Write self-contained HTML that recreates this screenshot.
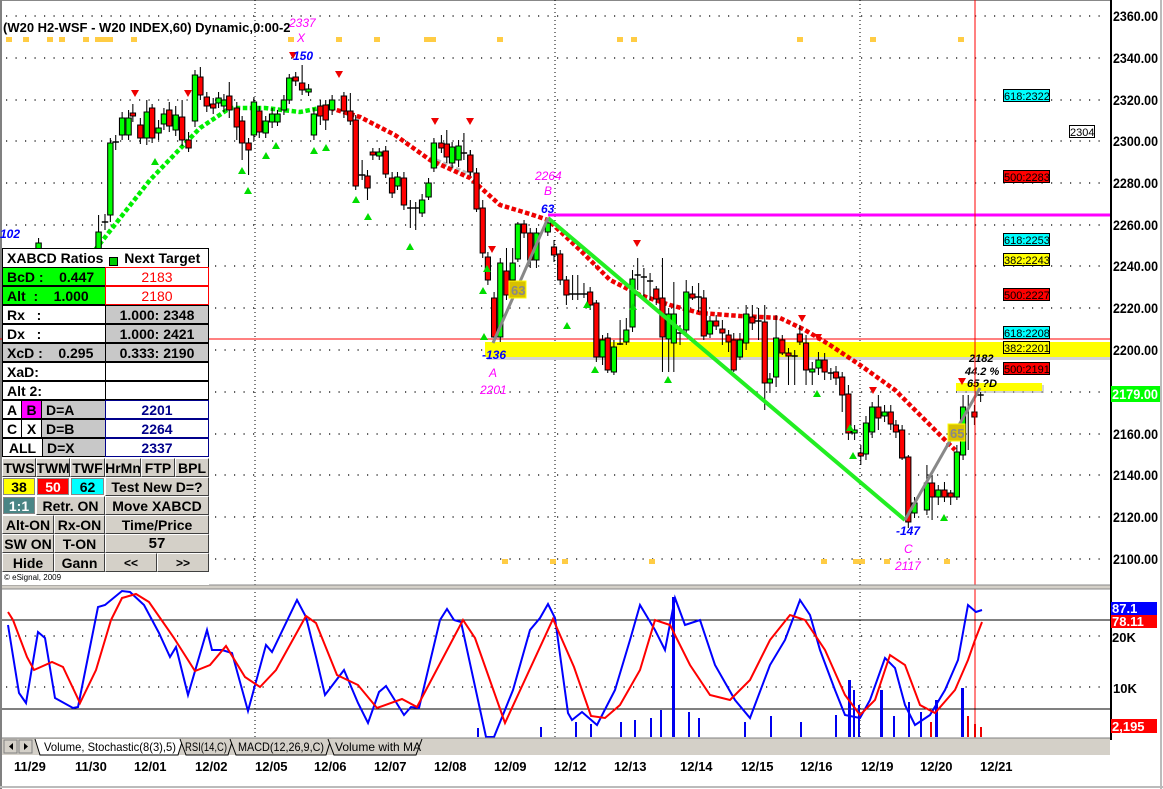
<!DOCTYPE html>
<html><head><meta charset="utf-8"><style>
*{margin:0;padding:0}
body{width:1163px;height:789px;overflow:hidden;background:#fff;position:relative;font-family:"Liberation Sans",Arial,sans-serif}
svg{position:absolute;left:0;top:0}
.c{position:absolute;box-sizing:border-box;border:1px solid #000;font:bold 14px "Liberation Sans",sans-serif;display:flex;align-items:center;height:19px;white-space:pre;overflow:hidden}
.ctr{justify-content:center}
.b{background:#d4d0c8;border:1px solid;border-color:#fff #404040 #404040 #fff;justify-content:center}
</style></head><body>
<svg width="1163" height="789" viewBox="0 0 1163 789">
<rect x="0" y="0" width="1163" height="789" fill="#fff"/>
<rect x="0" y="0" width="1163" height="1" fill="#888"/>
<rect x="0" y="0" width="2" height="789" fill="#808080"/>
<g stroke="#000" stroke-width="1.2" stroke-dasharray="1.2 8.3">
<line x1="6" y1="16" x2="1105" y2="16"/><line x1="6" y1="58" x2="1105" y2="58"/><line x1="6" y1="100" x2="1105" y2="100"/><line x1="6" y1="141" x2="1105" y2="141"/><line x1="6" y1="183" x2="1105" y2="183"/><line x1="6" y1="225" x2="1105" y2="225"/><line x1="6" y1="266" x2="1105" y2="266"/><line x1="6" y1="308" x2="1105" y2="308"/><line x1="6" y1="350" x2="1105" y2="350"/><line x1="6" y1="392" x2="1105" y2="392"/><line x1="6" y1="434" x2="1105" y2="434"/><line x1="6" y1="475" x2="1105" y2="475"/><line x1="6" y1="517" x2="1105" y2="517"/><line x1="6" y1="559" x2="1105" y2="559"/>
<line x1="6" y1="636" x2="1105" y2="636"/><line x1="6" y1="687" x2="1105" y2="687"/>
</g>
<g stroke="#000" stroke-width="1" stroke-dasharray="1 3">
<line x1="255" y1="0" x2="255" y2="738"/><line x1="555" y1="0" x2="555" y2="738"/><line x1="860" y1="0" x2="860" y2="738"/>
</g>
<g fill="#ffcc44">
<rect x="6" y="37" width="6" height="5"/><rect x="23" y="37" width="6" height="5"/><rect x="47" y="37" width="6" height="5"/><rect x="59" y="37" width="6" height="5"/><rect x="83" y="37" width="6" height="5"/><rect x="95" y="37" width="18" height="5"/><rect x="131" y="37" width="6" height="5"/><rect x="288" y="37" width="6" height="5"/><rect x="336" y="37" width="6" height="5"/><rect x="374" y="37" width="6" height="5"/><rect x="424" y="37" width="12" height="5"/><rect x="497" y="37" width="6" height="5"/><rect x="617" y="37" width="6" height="5"/><rect x="631" y="37" width="6" height="5"/><rect x="797" y="37" width="6" height="5"/><rect x="870" y="37" width="6" height="5"/><rect x="958" y="37" width="6" height="5"/>
<rect x="502" y="559" width="6" height="5"/><rect x="550" y="559" width="6" height="5"/><rect x="562" y="559" width="6" height="5"/><rect x="649" y="559" width="6" height="5"/><rect x="821" y="559" width="6" height="5"/><rect x="853" y="559" width="12" height="5"/><rect x="884" y="559" width="6" height="5"/><rect x="944" y="559" width="6" height="5"/>
</g>
<rect x="487" y="345" width="623" height="15" fill="#aaa" opacity=".5"/>
<rect x="485" y="342" width="625" height="15" fill="#ffff00"/>
<rect x="958" y="385" width="86" height="8" fill="#aaa" opacity=".5"/>
<rect x="956" y="383" width="86" height="8" fill="#ffff00"/>
<line x1="0" y1="339" x2="1110" y2="339" stroke="#f00" stroke-width="1"/>
<line x1="548" y1="215" x2="1110" y2="215" stroke="#f0f" stroke-width="3"/>
<path d="M95 250 L150 180 L200 128 L230 108 L265 108 L300 112 L330 106" fill="none" stroke="#00ee00" stroke-width="4.5" stroke-dasharray="4.5 2.5"/>
<path d="M430 158 L470 175" fill="none" stroke="#bbb" stroke-width="4.5" stroke-dasharray="4.5 2.5"/>
<path d="M330 108 L360 117 L395 135 L430 160 L470 178 L500 205 L530 214 L548 220 L580 250 L610 280 L640 295 L670 305 L700 313 L740 316 L780 318 L805 330 L830 345 L860 365 L895 390 L925 420 L955 450" fill="none" stroke="#ee0000" stroke-width="4.5" stroke-dasharray="4.5 2.5"/>
<g transform="scale(1.0714 1)" stroke="#000" stroke-width="1">
<path d="M36 238V254M92 215V255M98 214V230M103 138V222M108 135V150M114 112V140M120 110V140M124 104V122M131 118V144M137 100V145M142 104V143M148 120V140M153 108V130M158 102V132M164 106V136M170 100V146M176 132V152M182 70V127M187 67V100M193 92V112M199 98V114M204 92V108M209 94V112M214 82V118M221 102V140M226 116V160M232 138V175M237 97V140M242 106V138M248 116V138M254 108V128M259 110V126M265 95V115M270 74V104M276 72V86M282 65V95M288 84V96M293 108V140M299 100V125M304 100V130M310 95V115M321 92V118M327 93V125M332 115V190M338 160V180M343 170V200M348 148V160M354 148V160M360 146V178M366 172V198M371 172V190M377 172V210M383 200V228M388 202V230M394 194V217M400 178V200M405 138V172M412 135V153M417 130V163M422 142V168M428 140V167M433 133V160M439 150V175"/>
<g fill="#00ff00">
<rect x="33.5" y="243" width="5" height="6"/><rect x="89.5" y="232" width="5" height="18"/><rect x="100.5" y="143" width="5" height="72"/><rect x="111.5" y="118" width="5" height="17"/><rect x="117.5" y="118" width="5" height="17"/><rect x="134.5" y="112" width="5" height="26"/><rect x="145.5" y="128" width="5" height="5"/><rect x="150.5" y="114" width="5" height="10"/><rect x="161.5" y="115" width="5" height="15"/><rect x="179.5" y="75" width="5" height="46"/><rect x="201.5" y="98" width="5" height="5"/><rect x="206.5" y="100" width="5" height="6"/><rect x="234.5" y="102" width="5" height="33"/><rect x="245.5" y="121" width="5" height="12"/><rect x="251.5" y="114" width="5" height="8"/><rect x="256.5" y="114" width="5" height="8"/><rect x="262.5" y="100" width="5" height="10"/><rect x="267.5" y="78" width="5" height="22"/><rect x="285.5" y="89" width="5" height="3"/><rect x="290.5" y="114" width="5" height="21"/><rect x="307.5" y="100" width="5" height="10"/><rect x="351.5" y="152" width="5" height="4"/><rect x="368.5" y="177" width="5" height="9"/><rect x="391.5" y="200" width="5" height="13"/><rect x="397.5" y="183" width="5" height="14"/><rect x="402.5" y="143" width="5" height="25"/><rect x="419.5" y="147" width="5" height="16"/><rect x="425.5" y="146" width="5" height="14"/>
</g>
<g fill="#ff0000">
<rect x="121.5" y="113" width="5" height="3"/><rect x="128.5" y="125" width="5" height="13"/><rect x="139.5" y="108" width="5" height="30"/><rect x="155.5" y="110" width="5" height="16"/><rect x="167.5" y="117" width="5" height="23"/><rect x="173.5" y="140" width="5" height="8"/><rect x="184.5" y="77" width="5" height="18"/><rect x="190.5" y="97" width="5" height="9"/><rect x="196.5" y="104" width="5" height="4"/><rect x="211.5" y="96" width="5" height="14"/><rect x="218.5" y="108" width="5" height="19"/><rect x="223.5" y="121" width="5" height="22"/><rect x="229.5" y="143" width="5" height="7"/><rect x="239.5" y="111" width="5" height="21"/><rect x="273.5" y="77" width="5" height="4"/><rect x="279.5" y="83" width="5" height="7"/><rect x="296.5" y="106" width="5" height="10"/><rect x="301.5" y="105" width="5" height="15"/><rect x="318.5" y="96" width="5" height="15"/><rect x="324.5" y="111" width="5" height="10"/><rect x="329.5" y="120" width="5" height="66"/><rect x="340.5" y="176" width="5" height="12"/><rect x="345.5" y="152" width="5" height="3"/><rect x="357.5" y="151" width="5" height="23"/><rect x="363.5" y="178" width="5" height="15"/><rect x="374.5" y="178" width="5" height="27"/><rect x="409.5" y="143" width="5" height="5"/><rect x="414.5" y="144" width="5" height="13"/><rect x="436.5" y="155" width="5" height="16"/>
</g>
<path d="M95 222H101M105 142H111M335 175H341M380 208H386M385 208H391M430 153H436" stroke-width="1.5"/>
</g>
<g transform="translate(460 0) scale(1.033 1) translate(-460 0)" stroke="#000" stroke-width="1">
<path d="M470 150V176M476 168V212M482 200V258M487 252V285M493 292V342M499 258V342M505 248V300M511 248V285M516 222V262M522 220V238M528 228V268M534 228V268M545 218V236M551 240V262M557 250V285M563 276V305M569 275V300M574 275V300M580 283V298M586 287V310M592 300V362M598 335V365M603 333V373M609 340V375M615 320V345M621 318V345M627 270V332M632 258V290M638 268V300M644 273V300M650 286V305M656 258V372M662 308V372M667 282V372M673 325V345M679 280V335M685 286V300M691 283V312M696 290V340M702 316V338M708 315V330M714 320V345M720 330V352M725 333V372M731 333V360M737 305V350M743 305V330M749 308V340M755 305V410M760 373V393M766 315V387M772 335V355M778 348V385M784 350V385M789 325V345M795 335V385M801 362V385M807 352V375M813 353V380M819 368V380M824 366V385M830 372V412M836 385V440M842 425V440M848 445V465M853 416V460M859 402V438M865 395V430M871 405V422M877 405V430M882 420V438M888 425V460M894 455V528M900 497V518M912 465V515M917 475V520M923 485V505M929 482V502M935 490V505M941 445V500M947 395V460M952 395V450M958 405V425M964 392V402"/>
<g fill="#ff0000">
<rect x="467.5" y="155" width="5" height="17"/><rect x="473.5" y="173" width="5" height="36"/><rect x="479.5" y="208" width="5" height="45"/><rect x="484.5" y="257" width="5" height="23"/><rect x="490.5" y="298" width="5" height="39"/><rect x="502.5" y="271" width="5" height="24"/><rect x="519.5" y="224" width="5" height="9"/><rect x="525.5" y="233" width="5" height="27"/><rect x="548.5" y="247" width="5" height="8"/><rect x="554.5" y="254" width="5" height="26"/><rect x="560.5" y="280" width="5" height="15"/><rect x="583.5" y="292" width="5" height="13"/><rect x="589.5" y="303" width="5" height="54"/><rect x="600.5" y="338" width="5" height="32"/><rect x="647.5" y="289" width="5" height="10"/><rect x="653.5" y="298" width="5" height="39"/><rect x="682.5" y="294" width="5" height="4"/><rect x="693.5" y="298" width="5" height="38"/><rect x="705.5" y="321" width="5" height="5"/><rect x="711.5" y="329" width="5" height="4"/><rect x="717.5" y="335" width="5" height="7"/><rect x="722.5" y="340" width="5" height="30"/><rect x="740.5" y="317" width="5" height="6"/><rect x="752.5" y="322" width="5" height="61"/><rect x="769.5" y="340" width="5" height="13"/><rect x="775.5" y="353" width="5" height="3"/><rect x="786.5" y="334" width="5" height="8"/><rect x="792.5" y="343" width="5" height="27"/><rect x="810.5" y="360" width="5" height="12"/><rect x="821.5" y="372" width="5" height="6"/><rect x="827.5" y="377" width="5" height="18"/><rect x="833.5" y="394" width="5" height="39"/><rect x="845.5" y="453" width="5" height="3"/><rect x="862.5" y="407" width="5" height="11"/><rect x="874.5" y="412" width="5" height="12"/><rect x="879.5" y="425" width="5" height="7"/><rect x="885.5" y="430" width="5" height="28"/><rect x="891.5" y="457" width="5" height="65"/><rect x="914.5" y="483" width="5" height="14"/><rect x="926.5" y="490" width="5" height="7"/><rect x="932.5" y="493" width="5" height="4"/><rect x="955.5" y="412" width="5" height="5"/>
</g>
<g fill="#00ff00">
<rect x="496.5" y="263" width="5" height="74"/><rect x="508.5" y="263" width="5" height="17"/><rect x="513.5" y="224" width="5" height="35"/><rect x="531.5" y="233" width="5" height="27"/><rect x="542.5" y="223" width="5" height="9"/><rect x="595.5" y="340" width="5" height="17"/><rect x="606.5" y="347" width="5" height="25"/><rect x="618.5" y="330" width="5" height="12"/><rect x="624.5" y="279" width="5" height="48"/><rect x="659.5" y="314" width="5" height="25"/><rect x="664.5" y="314" width="5" height="29"/><rect x="676.5" y="292" width="5" height="38"/><rect x="699.5" y="321" width="5" height="13"/><rect x="728.5" y="340" width="5" height="17"/><rect x="734.5" y="314" width="5" height="29"/><rect x="757.5" y="379" width="5" height="4"/><rect x="763.5" y="338" width="5" height="39"/><rect x="798.5" y="369" width="5" height="3"/><rect x="804.5" y="360" width="5" height="8"/><rect x="839.5" y="430" width="5" height="3"/><rect x="850.5" y="423" width="5" height="31"/><rect x="856.5" y="407" width="5" height="25"/><rect x="868.5" y="412" width="5" height="4"/><rect x="897.5" y="503" width="5" height="10"/><rect x="909.5" y="483" width="5" height="27"/><rect x="920.5" y="490" width="5" height="7"/><rect x="938.5" y="452" width="5" height="45"/><rect x="944.5" y="407" width="5" height="48"/>
</g>
<path d="M566 294H572M571 294H577M577 294H583M612 344H618M629 275H635M635 277H641M641 281H647M670 333H676M688 297H694M746 321H752M781 356H787M816 373H822M961 395H967" stroke-width="1.5"/>
</g>
<line x1="548" y1="218" x2="905" y2="520" stroke="#22ee22" stroke-width="4"/>
<line x1="493" y1="343" x2="548" y2="218" stroke="#888" stroke-width="3"/>
<line x1="905" y1="520" x2="980" y2="388" stroke="#888" stroke-width="3"/>
<rect x="509" y="281" width="17" height="17" fill="#d8c000" stroke="#ff0"/>
<text x="511" y="295" font-size="13" font-weight="bold" fill="#888">63</text>
<rect x="948" y="424" width="17" height="17" fill="#d8c000" stroke="#ff0"/>
<text x="950" y="438" font-size="13" font-weight="bold" fill="#888">65</text>
<g fill="#00dd00">
<path d="M155 158l4 7h-8z M242 167l4 7h-8z M248 187l4 7h-8z M266 152l4 7h-8z M276 142l4 7h-8z M314 147l4 7h-8z M326 144l4 7h-8z M356 196l4 7h-8z M368 213l4 7h-8z M410 243l4 7h-8z M487 265l4 7h-8z M483 287l4 7h-8z M484 333l4 7h-8z M567 322l4 7h-8z M595 366l4 7h-8z M633 303l4 7h-8z M668 376l4 7h-8z M817 390l4 7h-8z M850 424l4 7h-8z M853 452l4 7h-8z M944 514l4 7h-8z M587 301l4 7h-8z"/>
</g>
<g fill="#ee0000">
<path d="M131 90h8l-4 7z M184 90h8l-4 7z M289 52h8l-4 7z M335 71h8l-4 7z M431 118h8l-4 7z M466 118h8l-4 7z M488 246h8l-4 7z M633 240h8l-4 7z M798 315h8l-4 7z M814 334h8l-4 7z M869 387h8l-4 7z M958 378h8l-4 7z"/>
</g>
<text x="3" y="32" font-size="13" font-weight="bold" fill="#000">(W20 H2-WSF - W20 INDEX,60) Dynamic,0:00-2</text>
<g font-style="italic" font-weight="bold" font-size="12">
<text x="289" y="27" fill="#ff00ff" font-weight="normal">2337</text>
<text x="297" y="42" fill="#ff00ff" font-weight="normal">X</text>
<text x="293" y="60" fill="#0000ff">150</text>
<text x="0" y="238" fill="#0000ff">102</text>
<text x="535" y="180" fill="#ff00ff" font-weight="normal">2264</text>
<text x="544" y="195" fill="#ff00ff" font-weight="normal">B</text>
<text x="541" y="213" fill="#0000ff">63</text>
<text x="482" y="359" fill="#0000ff">-136</text>
<text x="489" y="377" fill="#ff00ff" font-weight="normal">A</text>
<text x="480" y="394" fill="#ff00ff" font-weight="normal">2201</text>
<text x="896" y="535" fill="#0000ff">-147</text>
<text x="904" y="553" fill="#ff00ff" font-weight="normal">C</text>
<text x="895" y="570" fill="#ff00ff" font-weight="normal">2117</text>
<text x="969" y="362" fill="#000" font-size="11">2182</text>
<text x="965" y="375" fill="#000" font-size="11">44.2 %</text>
<text x="967" y="387" fill="#000" font-size="11">65 ?D</text>
</g>
<line x1="975" y1="0" x2="975" y2="755" stroke="#f00" stroke-width="1"/>
<rect x="1110" y="0" width="53" height="789" fill="#fff"/>
<rect x="1110" y="0" width="2" height="740" fill="#000"/>
<g font-size="14" font-weight="bold" fill="#000">
<text x="1113" y="21" textLength="45" lengthAdjust="spacingAndGlyphs">2360.00</text><text x="1113" y="63" textLength="45" lengthAdjust="spacingAndGlyphs">2340.00</text><text x="1113" y="105" textLength="45" lengthAdjust="spacingAndGlyphs">2320.00</text><text x="1113" y="146" textLength="45" lengthAdjust="spacingAndGlyphs">2300.00</text><text x="1113" y="188" textLength="45" lengthAdjust="spacingAndGlyphs">2280.00</text><text x="1113" y="230" textLength="45" lengthAdjust="spacingAndGlyphs">2260.00</text><text x="1113" y="271" textLength="45" lengthAdjust="spacingAndGlyphs">2240.00</text><text x="1113" y="313" textLength="45" lengthAdjust="spacingAndGlyphs">2220.00</text><text x="1113" y="355" textLength="45" lengthAdjust="spacingAndGlyphs">2200.00</text><text x="1113" y="439" textLength="45" lengthAdjust="spacingAndGlyphs">2160.00</text><text x="1113" y="480" textLength="45" lengthAdjust="spacingAndGlyphs">2140.00</text><text x="1113" y="522" textLength="45" lengthAdjust="spacingAndGlyphs">2120.00</text><text x="1113" y="564" textLength="45" lengthAdjust="spacingAndGlyphs">2100.00</text>
</g>
<rect x="1111" y="386" width="49" height="16" fill="#00ff00"/>
<text x="1112" y="399" font-size="14" font-weight="bold" fill="#fff" textLength="46" lengthAdjust="spacingAndGlyphs">2179.00</text>
<g stroke="#000" stroke-width="1">
<rect x="1003.5" y="89.5" width="46" height="12" fill="#00ffff"/><rect x="1003.5" y="170.5" width="46" height="12" fill="#ff0000"/><rect x="1003.5" y="233.5" width="46" height="12" fill="#00ffff"/><rect x="1003.5" y="253.5" width="46" height="12" fill="#ffff00"/><rect x="1003.5" y="288.5" width="46" height="12" fill="#ff0000"/><rect x="1003.5" y="326.5" width="46" height="12" fill="#00ffff"/><rect x="1003.5" y="341.5" width="46" height="12" fill="#ffff00"/><rect x="1003.5" y="362.5" width="46" height="12" fill="#ff0000"/><rect x="1069.5" y="125.5" width="25" height="12" fill="#fff"/>
</g>
<g font-size="11" fill="#000">
<text x="1004" y="100">618:2322</text><text x="1004" y="181">500:2283</text><text x="1004" y="244">618:2253</text><text x="1004" y="264">382:2243</text><text x="1004" y="299">500:2227</text><text x="1004" y="337">618:2208</text><text x="1004" y="352">382:2201</text><text x="1004" y="373">500:2191</text><text x="1070" y="136">2304</text>
</g>
<rect x="2" y="585" width="1108" height="4" fill="#d4d0c8"/>
<line x1="2" y1="585" x2="1110" y2="585" stroke="#888"/>
<line x1="2" y1="589" x2="1110" y2="589" stroke="#888"/>
<line x1="2" y1="620" x2="1110" y2="620" stroke="#000"/>
<line x1="2" y1="709" x2="1110" y2="709" stroke="#000"/>
<g fill="#0000ee">
<rect x="672" y="597" width="3" height="140"/><rect x="848" y="680" width="3" height="57"/><rect x="853" y="690" width="2" height="47"/><rect x="858" y="705" width="2" height="32"/><rect x="880" y="690" width="3" height="47"/><rect x="688" y="712" width="2" height="25"/><rect x="698" y="718" width="2" height="19"/><rect x="634" y="720" width="2" height="17"/><rect x="650" y="718" width="2" height="19"/><rect x="660" y="710" width="2" height="27"/><rect x="744" y="722" width="2" height="15"/><rect x="770" y="716" width="2" height="21"/><rect x="800" y="722" width="2" height="15"/><rect x="835" y="715" width="2" height="22"/><rect x="893" y="716" width="2" height="21"/><rect x="908" y="702" width="2" height="35"/><rect x="920" y="712" width="2" height="25"/><rect x="935" y="700" width="3" height="37"/><rect x="961" y="688" width="3" height="49"/><rect x="575" y="722" width="2" height="15"/><rect x="590" y="724" width="2" height="13"/><rect x="620" y="722" width="2" height="15"/><rect x="477" y="728" width="2" height="9"/><rect x="540" y="727" width="2" height="10"/>
</g>
<g fill="#ee0000"><rect x="967" y="716" width="2" height="21"/><rect x="974" y="724" width="2" height="13"/><rect x="980" y="727" width="2" height="10"/><rect x="930" y="722" width="2" height="15"/></g>
<polyline fill="none" stroke="#0000ff" stroke-width="2" points="8,625 19,693 26,703 38,632 45,638 55,698 73,708 78,707 98,607 105,605 122,591 130,592 144,605 159,633 170,657 176,647 188,695 207,630 212,650 222,650 232,653 248,711 266,645 272,652 297,600 306,617 316,657 325,695 344,670 358,703 368,723 379,692 386,686 404,715 411,707 419,708 440,620 447,609 454,620 461,622 486,737 494,737 513,690 530,630 540,618 548,604 555,618 568,713 572,720 582,712 597,725 615,690 630,640 640,605 655,630 665,650 675,598 685,625 700,620 715,665 735,700 750,718 770,665 785,640 800,600 810,615 820,650 835,690 845,715 860,718 870,700 885,658 895,668 905,705 915,725 930,715 945,690 958,660 968,605 976,612 982,610"/>
<polyline fill="none" stroke="#ff0000" stroke-width="2" points="8,612 13,620 27,657 34,670 52,662 63,667 80,703 96,670 111,620 122,598 136,594 149,602 174,638 195,671 210,665 226,646 245,677 260,687 276,670 306,616 316,623 337,675 358,685 377,708 402,699 417,707 463,620 475,638 505,723 553,619 574,667 591,716 605,718 620,705 640,670 655,620 670,625 690,665 710,695 730,700 750,680 770,640 790,615 805,620 825,650 845,695 860,715 875,700 890,655 905,665 920,705 935,713 955,690 968,660 975,640 982,622"/>
<rect x="1111" y="602" width="46" height="13" fill="#0000ff"/><text x="1112" y="613" font-size="13" font-weight="bold" fill="#fff">87.1</text>
<rect x="1111" y="615" width="46" height="13" fill="#ff0000"/><text x="1112" y="626" font-size="13" font-weight="bold" fill="#fff">78.11</text>
<text x="1112" y="642" font-size="13" font-weight="bold" fill="#000">20K</text>
<text x="1113" y="693" font-size="13" font-weight="bold" fill="#000">10K</text>
<rect x="1111" y="719" width="46" height="14" fill="#ff0000"/><text x="1112" y="731" font-size="13" font-weight="bold" fill="#fff">2,195</text>
<rect x="2" y="738" width="1108" height="17" fill="#d4d0c8"/>
<line x1="2" y1="738" x2="1110" y2="738" stroke="#808080"/>
<rect x="4" y="740" width="13" height="13" fill="#d4d0c8" stroke="#808080"/><path d="M13 743v7l-4-3.5z" fill="#000"/>
<rect x="19" y="740" width="13" height="13" fill="#d4d0c8" stroke="#808080"/><path d="M24 743v7l4-3.5z" fill="#000"/>
<path d="M35 739 L40 755 H178 L183 739" fill="#fff" stroke="#000"/>
<path d="M180 739 L186 755 H228 L233 739" fill="#d4d0c8" stroke="#000"/>
<path d="M230 739 L236 755 H326 L331 739" fill="#d4d0c8" stroke="#000"/>
<path d="M328 739 L334 755 H416 L422 739" fill="#d4d0c8" stroke="#000"/>
<g font-size="12" fill="#000"><text x="44" y="751" textLength="132" lengthAdjust="spacingAndGlyphs">Volume, Stochastic(8(3),5)</text><text x="185" y="751" textLength="42" lengthAdjust="spacingAndGlyphs">RSI(14,C)</text><text x="238" y="751" textLength="86" lengthAdjust="spacingAndGlyphs">MACD(12,26,9,C)</text><text x="335" y="751">Volume with MA</text></g>
<g font-size="13" font-weight="bold" fill="#000">
<text x="14" y="771">11/29</text><text x="75" y="771">11/30</text><text x="134" y="771">12/01</text><text x="195" y="771">12/02</text><text x="255" y="771">12/05</text><text x="314" y="771">12/06</text><text x="374" y="771">12/07</text><text x="434" y="771">12/08</text><text x="494" y="771">12/09</text><text x="554" y="771">12/12</text><text x="614" y="771">12/13</text><text x="680" y="771">12/14</text><text x="741" y="771">12/15</text><text x="800" y="771">12/16</text><text x="861" y="771">12/19</text><text x="920" y="771">12/20</text><text x="980" y="771">12/21</text>
</g>
<line x1="0" y1="787" x2="1163" y2="787" stroke="#bbb" stroke-width="2"/>
<line x1="1161" y1="0" x2="1161" y2="789" stroke="#bbb" stroke-width="2"/>
</svg>

<div style="position:absolute;left:2px;top:248px;width:207px;height:337px;background:#fff"></div>
<div class="c" style="left:2px;top:248px;width:207px;height:20px;background:#fff;padding-left:4px">XABCD Ratios <span style="display:inline-block;width:7px;height:7px;background:#0c0;border:1px solid #000;margin:6px 2px 0 2px"></span> Next Target</div>
<div class="c" style="left:2px;top:267px;width:104px;background:#00ff00;padding-left:4px">BcD :    0.447</div>
<div class="c ctr" style="left:105px;top:267px;width:104px;border-color:#f00;color:#f00;font-weight:normal">2183</div>
<div class="c" style="left:2px;top:286px;width:104px;background:#00ff00;padding-left:4px">Alt  :    1.000</div>
<div class="c ctr" style="left:105px;top:286px;width:104px;border-color:#f00;color:#f00;font-weight:normal">2180</div>
<div class="c" style="left:2px;top:305px;width:104px;background:#fff;padding-left:4px">Rx   :</div>
<div class="c ctr" style="left:105px;top:305px;width:104px;background:#c8c8c8">1.000: 2348</div>
<div class="c" style="left:2px;top:324px;width:104px;background:#fff;padding-left:4px">Dx   :</div>
<div class="c ctr" style="left:105px;top:324px;width:104px;background:#c8c8c8">1.000: 2421</div>
<div class="c" style="left:2px;top:343px;width:104px;background:#c8c8c8;padding-left:4px">XcD :    0.295</div>
<div class="c ctr" style="left:105px;top:343px;width:104px;background:#c8c8c8">0.333: 2190</div>
<div class="c" style="left:2px;top:362px;width:104px;background:#fff;padding-left:4px">XaD:</div>
<div class="c" style="left:105px;top:362px;width:104px;background:#fff"></div>
<div class="c" style="left:2px;top:381px;width:104px;background:#fff;padding-left:4px">Alt 2:</div>
<div class="c" style="left:105px;top:381px;width:104px;background:#fff"></div>
<div class="c ctr" style="left:2px;top:400px;width:20px;background:#fff">A</div>
<div class="c ctr" style="left:21px;top:400px;width:21px;background:#ff00ff">B</div>
<div class="c" style="left:41px;top:400px;width:65px;background:#c8c8c8;padding-left:4px">D=A</div>
<div class="c ctr" style="left:105px;top:400px;width:104px;border-color:#00008b;color:#00008b">2201</div>
<div class="c ctr" style="left:2px;top:419px;width:20px;background:#fff">C</div>
<div class="c ctr" style="left:21px;top:419px;width:21px;background:#fff">X</div>
<div class="c" style="left:41px;top:419px;width:65px;background:#c8c8c8;padding-left:4px">D=B</div>
<div class="c ctr" style="left:105px;top:419px;width:104px;border-color:#00008b;color:#00008b">2264</div>
<div class="c ctr" style="left:2px;top:438px;width:41px;background:#fff">ALL</div>
<div class="c" style="left:42px;top:438px;width:64px;background:#c8c8c8;padding-left:4px">D=X</div>
<div class="c ctr" style="left:105px;top:438px;width:104px;border-color:#00008b;color:#00008b">2337</div>

<div class="c b" style="left:2px;top:458px;width:34px">TWS</div>
<div class="c b" style="left:36px;top:458px;width:34px">TWM</div>
<div class="c b" style="left:70px;top:458px;width:35px">TWF</div>
<div class="c b" style="left:105px;top:458px;width:36px">HrMn</div>
<div class="c b" style="left:141px;top:458px;width:34px">FTP</div>
<div class="c b" style="left:175px;top:458px;width:34px">BPL</div>
<div class="c ctr" style="left:3px;top:478px;width:32px;height:17px;background:#ffff00;border-color:#888">38</div>
<div class="c ctr" style="left:37px;top:478px;width:32px;height:17px;background:#ff0000;color:#fff;border-color:#888">50</div>
<div class="c ctr" style="left:71px;top:478px;width:33px;height:17px;background:#00ffff;border-color:#888">62</div>
<div class="c b" style="left:105px;top:477px;width:104px">Test New D=?</div>
<div class="c ctr" style="left:3px;top:497px;width:32px;height:17px;background:#4a8585;color:#fff;border-color:#888">1:1</div>
<div class="c b" style="left:36px;top:496px;width:69px">Retr. ON</div>
<div class="c b" style="left:105px;top:496px;width:104px">Move XABCD</div>
<div class="c b" style="left:2px;top:515px;width:52px">Alt-ON</div>
<div class="c b" style="left:54px;top:515px;width:51px">Rx-ON</div>
<div class="c b" style="left:105px;top:515px;width:104px">Time/Price</div>
<div class="c b" style="left:2px;top:534px;width:52px">SW ON</div>
<div class="c b" style="left:54px;top:534px;width:51px">T-ON</div>
<div class="c b" style="left:105px;top:534px;width:104px;font-size:15px">57</div>
<div class="c b" style="left:2px;top:553px;width:52px">Hide</div>
<div class="c b" style="left:54px;top:553px;width:51px">Gann</div>
<div class="c b" style="left:105px;top:553px;width:52px;font-size:12px">&lt;&lt;</div>
<div class="c b" style="left:157px;top:553px;width:52px;font-size:12px">&gt;&gt;</div>
<div style="position:absolute;left:4px;top:573px;font:8px 'Liberation Sans',sans-serif;color:#000">© eSignal, 2009</div>
</body></html>
